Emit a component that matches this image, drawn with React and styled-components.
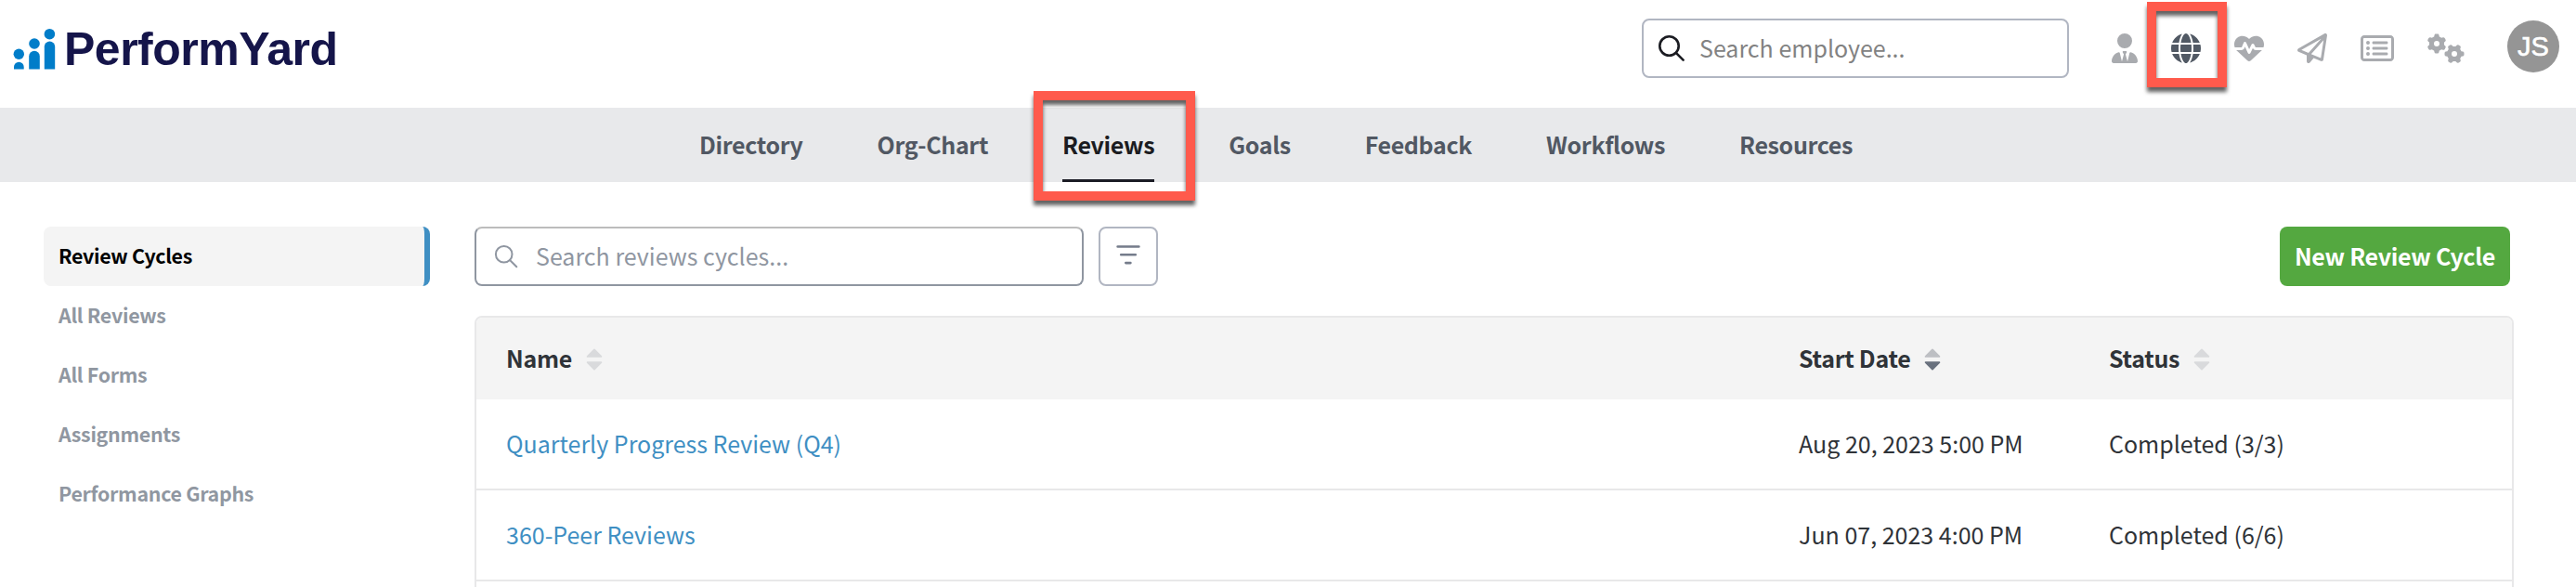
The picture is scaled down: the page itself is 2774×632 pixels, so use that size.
import styled, { createGlobalStyle, css } from "styled-components";
import {
  FaGears,
  FaGlobe,
  FaHeartPulse,
  FaRegPaperPlane,
  FaRegRectangleList,
  FaUserTie,
} from "react-icons/fa6";

const navItems = [
  "Directory",
  "Org-Chart",
  "Reviews",
  "Goals",
  "Feedback",
  "Workflows",
  "Resources",
];

const sideItems = [
  "Review Cycles",
  "All Reviews",
  "All Forms",
  "Assignments",
  "Performance Graphs",
];

const cycles = [
  {
    name: "Quarterly Progress Review (Q4)",
    date: "Aug 20, 2023 5:00 PM",
    status: "Completed (3/3)",
  },
  {
    name: "360-Peer Reviews",
    date: "Jun 07, 2023 4:00 PM",
    status: "Completed (6/6)",
  },
];

export default function App() {
  return (
    <Page>
      <GlobalStyle />
      <Header>
        <Logo>
          <LogoMark />
          <LogoText>PerformYard</LogoText>
        </Logo>
        <EmployeeSearch>
          <EmployeeSearchIcon viewBox="0 0 28 28">
            <circle cx="11.5" cy="11.5" r="10.2" />
            <path d="M18.8 18.8L26.6 26.6" />
          </EmployeeSearchIcon>
          <span>Search employee...</span>
        </EmployeeSearch>
        <HeaderIcons>
          <HeaderIcon $width={28}>
            <FaUserTie />
          </HeaderIcon>
          <HeaderIcon $width={32} $active>
            <FaGlobe />
            <GlobeHighlight />
          </HeaderIcon>
          <HeaderIcon $width={32}>
            <FaHeartPulse />
          </HeaderIcon>
          <HeaderIcon $width={32}>
            <FaRegPaperPlane />
          </HeaderIcon>
          <HeaderIcon $width={36}>
            <FaRegRectangleList />
          </HeaderIcon>
          <HeaderIcon $width={40}>
            <FaGears />
          </HeaderIcon>
        </HeaderIcons>
        <Avatar>JS</Avatar>
      </Header>

      <Nav>
        {navItems.map((item) => (
          <NavItem key={item} $active={item === "Reviews"}>
            {item}
            {item === "Reviews" && <NavHighlight />}
          </NavItem>
        ))}
      </Nav>

      <Body>
        <Sidebar>
          {sideItems.map((item) => (
            <SideItem key={item} $active={item === "Review Cycles"}>
              {item}
            </SideItem>
          ))}
        </Sidebar>

        <Main>
          <Toolbar>
            <CycleSearch>
              <CycleSearchIcon viewBox="0 0 24 24">
                <circle cx="9.7" cy="9.7" r="8.8" />
                <path d="M16 16L23.3 23.3" />
              </CycleSearchIcon>
              <span>Search reviews cycles...</span>
            </CycleSearch>
            <FilterButton>
              <svg width="26" height="22" viewBox="0 0 26 22">
                <path d="M1.6 1.5H24.4M5.2 10.3H20.8M10.3 19.1H15.4" />
              </svg>
            </FilterButton>
            <NewButton>New Review Cycle</NewButton>
          </Toolbar>

          <Table>
            <HeadRow>
              <HeadCell>
                Name
                <SortIcon up="#d9dadc" down="#d9dadc" />
              </HeadCell>
              <HeadCell>
                Start Date
                <SortIcon up="#bdbfc3" down="#69717e" />
              </HeadCell>
              <HeadCell>
                Status
                <SortIcon up="#d9dadc" down="#d9dadc" />
              </HeadCell>
            </HeadRow>
            {cycles.map((cycle) => (
              <Row key={cycle.name}>
                <CycleLink>{cycle.name}</CycleLink>
                <span>{cycle.date}</span>
                <span>{cycle.status}</span>
              </Row>
            ))}
          </Table>
        </Main>
      </Body>
    </Page>
  );
}

function LogoMark() {
  return (
    <svg width="48" height="46" viewBox="0 0 48 46" fill="#007dc9">
      <circle cx="6.3" cy="29.3" r="5.7" />
      <path d="M1 45.6V43a5.3 5.3 0 0 1 10.7 0v2.6z" />
      <circle cx="23" cy="18" r="5.8" />
      <path d="M17.2 45.6V31.6a5.8 5.8 0 0 1 11.6 0v14z" />
      <circle cx="39.4" cy="7.7" r="5.8" />
      <path d="M33.8 45.6V21.2a5.7 5.7 0 0 1 11.4 0v24.4z" />
    </svg>
  );
}

function SortIcon({ up, down }) {
  return (
    <svg width="18" height="24" viewBox="0 0 18 24">
      <path
        d="M9 1.4L16.4 8.9H1.6z"
        fill={up}
        stroke={up}
        strokeWidth="1.8"
        strokeLinejoin="round"
      />
      <path
        d="M9 22.6L16.4 15.1H1.6z"
        fill={down}
        stroke={down}
        strokeWidth="1.8"
        strokeLinejoin="round"
      />
    </svg>
  );
}

const GlobalStyle = createGlobalStyle`
  * {
    box-sizing: border-box;
  }
  body {
    margin: 0;
    background: #fff;
  }
`;

const semibold = css`
  font-weight: 700;
  letter-spacing: -0.3px;
`;

const Page = styled.div`
  height: 632px;
  overflow: hidden;
  background: #fff;
  color: #2f3338;
  font-family: "Noto Sans CJK SC", "Open Sans", sans-serif;
  font-size: 25px;
  line-height: 36px;
  white-space: nowrap;
`;

const Header = styled.header`
  display: flex;
  align-items: center;
  height: 116px;
  padding: 0 18px 12px 14px;
`;

const Logo = styled.div`
  display: flex;
  align-items: center;
  gap: 7px;
`;

const LogoText = styled.span`
  padding-top: 1px;
  color: #15154a;
  font-family: "Liberation Sans", Arial, sans-serif;
  font-size: 50px;
  font-weight: 700;
  line-height: 56px;
  letter-spacing: -0.5px;
`;

const EmployeeSearch = styled.div`
  display: flex;
  align-items: center;
  gap: 16px;
  width: 460px;
  height: 64px;
  margin-left: auto;
  padding: 0 16px;
  border: 2px solid #b1b6c2;
  border-radius: 8px;
  color: #828282;
  span {
    padding-bottom: 2px;
  }
`;

const EmployeeSearchIcon = styled.svg`
  width: 28px;
  height: 28px;
  fill: none;
  stroke: #1b1c22;
  stroke-width: 2.6;
  stroke-linecap: round;
`;

const HeaderIcons = styled.div`
  display: flex;
  align-items: center;
  gap: 36px;
  margin-left: 46px;
`;

const HeaderIcon = styled.div`
  position: relative;
  width: ${({ $width }) => $width}px;
  height: 32px;
  color: ${({ $active }) => ($active ? "#515964" : "#a9abaf")};
  & > svg {
    display: block;
    width: 100%;
    height: 32px;
  }
`;

const Highlight = styled.div`
  position: absolute;
  z-index: 1;
  border: 10px solid #ff5a4c;
  filter: drop-shadow(0 5px 2px rgba(0, 0, 0, 0.62));
`;

const GlobeHighlight = styled(Highlight)`
  top: -34px;
  left: -26px;
  width: 86px;
  height: 92px;
`;

const NavHighlight = styled(Highlight)`
  top: -18px;
  left: -31px;
  width: 174px;
  height: 118px;
`;

const Avatar = styled.div`
  display: flex;
  align-items: center;
  justify-content: center;
  width: 56px;
  height: 56px;
  margin: 0 0 4px 46px;
  border-radius: 50%;
  background: #959595;
  color: #fff;
  font-family: "Liberation Sans", Arial, sans-serif;
  font-size: 29px;
  -webkit-text-stroke: 0.6px #fff;
`;

const Nav = styled.nav`
  display: flex;
  gap: 80px;
  height: 80px;
  padding-left: 753px;
  background: #e8e9eb;
`;

const NavItem = styled.div`
  ${semibold}
  position: relative;
  padding-top: 21px;
  border-bottom: ${({ $active }) => ($active ? "3px solid #1b1c25" : "none")};
  color: ${({ $active }) => ($active ? "#1b1c21" : "#515863")};
  letter-spacing: -0.35px;
`;

const Body = styled.div`
  display: flex;
  gap: 48px;
  padding: 48px 67px 0 47px;
`;

const Sidebar = styled.aside`
  width: 416px;
`;

const SideItem = styled.div`
  ${semibold}
  display: flex;
  align-items: center;
  height: 64px;
  padding: 0 16px 2px;
  border-radius: 8px;
  font-size: 21.4px;
  color: #9097a1;
  ${({ $active }) =>
    $active &&
    css`
      border-right: 6px solid #3f8fc3;
      background: #f4f4f4;
      color: #000;
    `}
`;

const Main = styled.main`
  flex: 1;
`;

const Toolbar = styled.div`
  display: flex;
  gap: 16px;
  height: 64px;
  margin-bottom: 32px;
  padding-right: 4px;
`;

const CycleSearch = styled.div`
  display: flex;
  align-items: center;
  gap: 20px;
  width: 656px;
  padding: 0 20px;
  border: 2px solid #8f96a1;
  border-top-color: #bcbcbc;
  border-radius: 8px;
  color: #8f96a1;
  span {
    padding-bottom: 2px;
  }
`;

const CycleSearchIcon = styled.svg`
  width: 24px;
  height: 24px;
  overflow: visible;
  fill: none;
  stroke: #8f96a1;
  stroke-width: 2;
  stroke-linecap: round;
`;

const FilterButton = styled.button`
  width: 64px;
  padding: 0;
  border: 2px solid #b1b6c2;
  border-radius: 8px;
  background: #fff;
  svg {
    display: block;
    margin: 0 auto 2px;
    fill: none;
    stroke: #757c8b;
    stroke-width: 2.6;
    stroke-linecap: round;
  }
`;

const NewButton = styled.button`
  ${semibold}
  width: 248px;
  margin-left: auto;
  padding: 0 0 2px;
  border: 0;
  border-radius: 8px;
  background: #54a840;
  color: #fff;
  font-family: inherit;
  font-size: 25px;
`;

const Table = styled.div`
  height: 400px;
  border: 2px solid #e8e8e9;
  border-radius: 8px;
  overflow: hidden;
`;

const Row = styled.div`
  display: grid;
  grid-template-columns: 1392px 334px 1fr;
  align-items: center;
  height: 98px;
  padding: 0 0 2px 32px;
  border-bottom: 2px solid #e8e8e9;
`;

const HeadRow = styled(Row)`
  height: 88px;
  border-bottom: 0;
  background: #f4f4f4;
`;

const HeadCell = styled.div`
  ${semibold}
  display: flex;
  align-items: center;
  gap: 15px;
  svg {
    margin-top: 3px;
  }
`;

const CycleLink = styled.a`
  color: #3f8fc3;
`;
